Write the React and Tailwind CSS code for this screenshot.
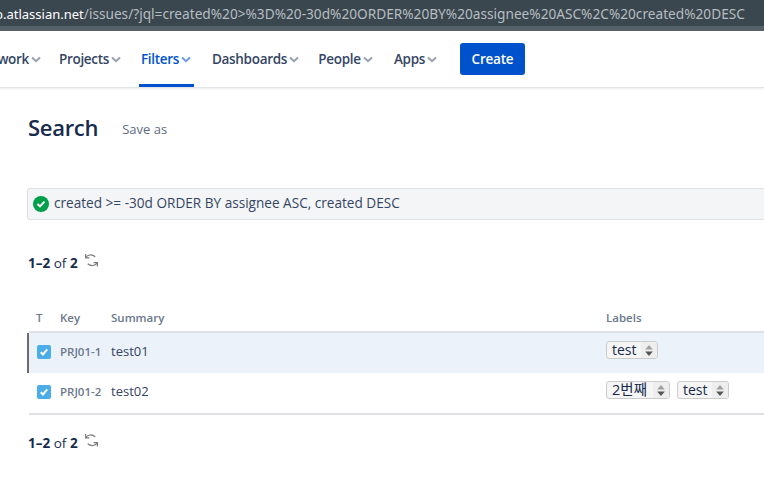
import React from "react";

function Chevron({ color = "#97a0af" }) {
  return (
    <svg width="12" height="12" viewBox="0 0 12 12" className="shrink-0 ml-[1px]">
      <path d="M2 4.5 L6 8.2 L10 4.5" fill="none" stroke={color} strokeWidth="2" />
    </svg>
  );
}

const navText = "text-[13.5px] font-semibold tracking-[-0.3px] whitespace-nowrap";

function NavItem({ label, active, className = "" }) {
  return (
    <div className={`relative h-full flex items-center justify-center shrink-0 ${className}`}>
      <span className={`${navText} ${active ? "text-[#0052cc]" : "text-[#344563]"}`}>{label}</span>
      <Chevron color={active ? "#6d9be0" : "#97a0af"} />
      {active && <div className="absolute left-0 right-0 bottom-0 h-[3px] bg-[#0052cc]" />}
    </div>
  );
}

function Refresh() {
  return (
    <svg width="15" height="15" viewBox="0 0 14 14" fill="none" stroke="#7a7a7a" strokeWidth="1.1">
      <path d="M1.5 1 V4.5 H5" />
      <path d="M1.7 4.3 C3 1.5 7.5 0.8 10.5 3.5" />
      <path d="M12.5 12.5 V9 H9" />
      <path d="M12.3 9.2 C11 12 6.5 12.8 3.5 10" />
    </svg>
  );
}

function Check() {
  return (
    <div className="w-[14px] h-[14px] rounded-[2px] bg-[#4bade8] flex items-center justify-center">
      <svg width="10" height="10" viewBox="0 0 10 10" fill="none" stroke="#fff" strokeWidth="2">
        <path d="M1.8 5.2 L4 7.4 L8.2 2.4" />
      </svg>
    </div>
  );
}

function Label({ text, wide }) {
  return (
    <div className="h-[18px] flex items-stretch border border-[#cccccc] rounded-[3px] bg-[#f5f5f5] overflow-hidden">
      <span className={`pl-[5px] ${wide ? "pr-[6px] text-[14.5px]" : "pr-[4px] text-[14px]"} leading-[15px] text-[#172b4d] whitespace-nowrap`}>{text}</span>
      <span className="w-[16px] bg-[#eeeeee] flex items-center justify-center">
        <svg width="10" height="13" viewBox="0 0 9 12">
          <path d="M4.5 1 L8 5 H1 Z" fill="#a0a0a0" />
          <path d="M4.5 11 L8 7 H1 Z" fill="#555555" />
        </svg>
      </span>
    </div>
  );
}

function Pager({ className = "" }) {
  return (
    <div className={`flex items-start h-[18px] text-[13.5px] leading-[18px] text-[#172b4d] ${className}`}>
      <span className="ml-[1px]"><b className="font-bold">1–2</b> of <b className="font-bold">2</b></span>
      <span className="ml-[6px] -mt-[1px]"><Refresh /></span>
    </div>
  );
}

const keyText = "w-[51px] text-[11.5px] font-semibold text-[#6b778c] whitespace-nowrap";

export default function App() {
  return (
    <div className="w-[764px] h-[499px] bg-white overflow-hidden flex flex-col font-['Open_Sans','Noto_Sans_CJK_KR',sans-serif]">
      <div className="h-[26px] bg-[#3b474f] flex items-center overflow-hidden whitespace-nowrap shrink-0">
        <div className="-ml-[5px] font-['Noto_Sans','Noto_Sans_CJK_KR',sans-serif]">
          <span className="text-white text-[13px]">b.atlassian.net</span>
          <span className="text-[#b6bdc1] text-[13.66px]">/issues/?jql=created%20&gt;%3D%20-30d%20ORDER%20BY%20assignee%20ASC%2C%20created%20DESC</span>
        </div>
      </div>
      <div className="h-[5px] bg-[#56626a] shrink-0" />
      <div className="h-[57px] shrink-0 flex items-center border-b border-[#e3e5ea] shadow-[0_1px_2px_rgba(9,30,66,0.08)] overflow-hidden">
        <div className="h-full w-[42px] shrink-0 flex justify-end items-center overflow-hidden">
          <div className="flex items-center shrink-0">
            <span className={`${navText} text-[#344563]`}>work</span>
            <Chevron />
          </div>
        </div>
        <NavItem label="Projects" className="w-[69px] ml-[14px]" />
        <NavItem label="Filters" active className="w-[55px] ml-[14px]" />
        <NavItem label="Dashboards" className="w-[94px] ml-[15px]" />
        <NavItem label="People" className="w-[60px] ml-[13px]" />
        <NavItem label="Apps" className="w-[48px] ml-[16px]" />
        <div className="ml-[20px] w-[65px] h-[32px] shrink-0 rounded-[3px] bg-[#0052cc] flex items-center justify-center text-white text-[13.5px] font-semibold tracking-[-0.2px]">Create</div>
      </div>

      <div className="pl-[27px] flex flex-col grow">
        <div className="mt-[23px] flex items-center h-[32px]">
          <span className="ml-[1px] text-[22px] font-semibold tracking-[-0.3px] text-[#172b4d] leading-[32px]">Search</span>
          <span className="ml-[24px] mt-[6px] text-[13px] text-[#5e6c84]">Save as</span>
        </div>
        <div className="mt-[45px] h-[32px] pb-[1px] bg-[#f4f5f7] border border-[#dfe1e6] rounded-l-[3px] border-r-0 flex items-center pl-[5px]">
          <div className="w-[16px] h-[16px] rounded-full bg-[#00a04a] flex items-center justify-center shrink-0">
            <svg width="10" height="10" viewBox="0 0 10 10" fill="none" stroke="#fff" strokeWidth="2"><path d="M1.5 5 L4 7.4 L8.5 2.6" /></svg>
          </div>
          <span className="ml-[5px] text-[13.6px] text-[#344563]">created &gt;= -30d ORDER BY assignee ASC, created DESC</span>
        </div>
        <Pager className="mt-[34px]" />

        <div className="mt-[36px] ml-[2px]">
          <div className="h-[25px] pb-[4px] border-b-2 border-[#dfe1e6] flex items-center text-[11.5px] font-semibold text-[#6b778c]">
            <span className="w-[31px] pl-[7px]">T</span>
            <span className="w-[51px]">Key</span>
            <span className="w-[495px]">Summary</span>
            <span>Labels</span>
          </div>
          <div className="h-[40px] pb-[3px] bg-[#ebf2f9] border-l-2 border-[#6b6b6b] -ml-[2px] flex items-center">
            <span className="w-[31px] pl-[8px]"><Check /></span>
            <span className={keyText}>PRJ01-1</span>
            <span className="w-[495px] text-[13px] text-[#344563]">test01</span>
            <div className="self-start mt-[8px]"><Label text="test" /></div>
          </div>
          <div className="h-[42px] pb-[3px] border-b-2 border-[#dfe1e6] flex items-center">
            <span className="w-[31px] pl-[8px]"><Check /></span>
            <span className={keyText}>PRJ01-2</span>
            <span className="w-[495px] text-[13px] text-[#344563]">test02</span>
            <div className="flex gap-[7px] self-start mt-[8px]">
              <Label text="2번째" wide />
              <Label text="test" />
            </div>
          </div>
        </div>
        <Pager className="mt-[19px]" />
      </div>
    </div>
  );
}
